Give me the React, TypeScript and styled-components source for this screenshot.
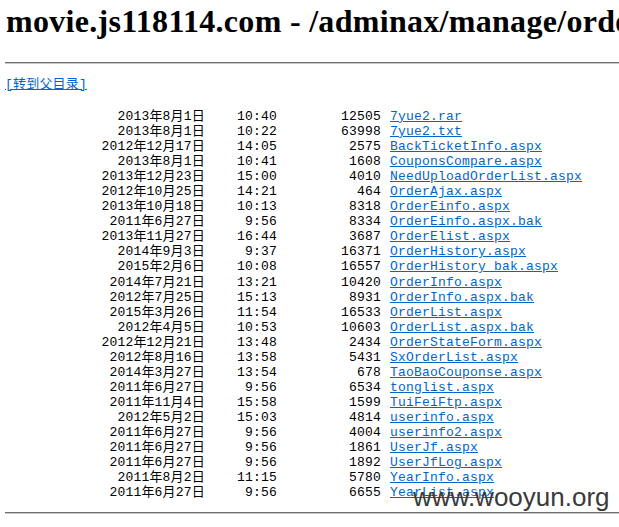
import React from "react";
import styled, { createGlobalStyle } from "styled-components";

interface Entry {
  date: string;
  time: string;
  size: number;
  name: string;
}

const ENTRIES: Entry[] = [
  { date: "2013年8月1日", time: "10:40", size: 12505, name: "7yue2.rar" },
  { date: "2013年8月1日", time: "10:22", size: 63998, name: "7yue2.txt" },
  { date: "2012年12月17日", time: "14:05", size: 2575, name: "BackTicketInfo.aspx" },
  { date: "2013年8月1日", time: "10:41", size: 1608, name: "CouponsCompare.aspx" },
  { date: "2013年12月23日", time: "15:00", size: 4010, name: "NeedUploadOrderList.aspx" },
  { date: "2012年10月25日", time: "14:21", size: 464, name: "OrderAjax.aspx" },
  { date: "2013年10月18日", time: "10:13", size: 8318, name: "OrderEinfo.aspx" },
  { date: "2011年6月27日", time: "9:56", size: 8334, name: "OrderEinfo.aspx.bak" },
  { date: "2013年11月27日", time: "16:44", size: 3687, name: "OrderElist.aspx" },
  { date: "2014年9月3日", time: "9:37", size: 16371, name: "OrderHistory.aspx" },
  { date: "2015年2月6日", time: "10:08", size: 16557, name: "OrderHistory bak.aspx" },
  { date: "2014年7月21日", time: "13:21", size: 10420, name: "OrderInfo.aspx" },
  { date: "2012年7月25日", time: "15:13", size: 8931, name: "OrderInfo.aspx.bak" },
  { date: "2015年3月26日", time: "11:54", size: 16533, name: "OrderList.aspx" },
  { date: "2012年4月5日", time: "10:53", size: 10603, name: "OrderList.aspx.bak" },
  { date: "2012年12月21日", time: "13:48", size: 2434, name: "OrderStateForm.aspx" },
  { date: "2012年8月16日", time: "13:58", size: 5431, name: "SxOrderList.aspx" },
  { date: "2014年3月27日", time: "13:54", size: 678, name: "TaoBaoCouponse.aspx" },
  { date: "2011年6月27日", time: "9:56", size: 6534, name: "tonglist.aspx" },
  { date: "2011年11月4日", time: "15:58", size: 1599, name: "TuiFeiFtp.aspx" },
  { date: "2012年5月2日", time: "15:03", size: 4814, name: "userinfo.aspx" },
  { date: "2011年6月27日", time: "9:56", size: 4004, name: "userinfo2.aspx" },
  { date: "2011年6月27日", time: "9:56", size: 1861, name: "UserJf.aspx" },
  { date: "2011年6月27日", time: "9:56", size: 1892, name: "UserJfLog.aspx" },
  { date: "2011年8月2日", time: "11:15", size: 5780, name: "YearInfo.aspx" },
  { date: "2011年6月27日", time: "9:56", size: 6655, name: "YearList.aspx" },
];

const GlobalStyle = createGlobalStyle`
  html, body {
    margin: 0;
    overflow: hidden;
    background: #fff;
  }
  body {
    padding: 0 0 0 6px;
  }
`;

function App() {
  return (
    <>
      <GlobalStyle />
      <Page>
        <Title>movie.js118114.com - /adminax/manage/order/</Title>
        <Rule />
        <Listing>
          <ParentLink href="#">[转到父目录]</ParentLink>
          <Rows>
            {ENTRIES.map((e) => (
              <React.Fragment key={e.name}>
                <DateCell>{e.date}</DateCell>
                <NumCell>{e.time}</NumCell>
                <NumCell>{e.size}</NumCell>
                <FileLink href="#">{e.name}</FileLink>
              </React.Fragment>
            ))}
          </Rows>
        </Listing>
        <Rule $bottom />
        <Watermark>www.wooyun.org</Watermark>
      </Page>
    </>
  );
}

export default App;

const Page = styled.div`
  position: relative;
  height: 527px;
`;

const Title = styled.h1`
  margin: 0;
  padding-top: 3px;
  font-family: "Liberation Serif", "Times New Roman", serif;
  font-size: 32px;
  font-weight: bold;
  line-height: 36.8px;
  letter-spacing: 0.3px;
  color: #000;
  white-space: nowrap;
  overflow: hidden;
`;

const Rule = styled.hr<{ $bottom?: boolean }>`
  margin: ${(p) => (p.$bottom ? "12px 0 0 -1px" : "22px 0 0 -1px")};
  height: 0;
  border: 0;
  border-top: 1px solid #6e6e6e;
  border-bottom: 1px solid #c8c8c8;
`;

const Listing = styled.div`
  margin-top: 13px;
  font-family: "Liberation Mono", "Courier New", "Noto Sans CJK SC", monospace;
  font-size: 13px;
  line-height: 15.06px;
  letter-spacing: 0.2px;
  color: #000;
`;

const ParentLink = styled.a`
  display: inline-block;
  margin-left: -1px;
  color: #0066cc;
  text-decoration: underline;
`;

const Rows = styled.div`
  display: grid;
  grid-template-columns: 199px 72px 104px auto;
  margin-top: 17px;
`;

const DateCell = styled.span`
  text-align: right;
  white-space: nowrap;
`;

const NumCell = styled.span`
  text-align: right;
  white-space: nowrap;
`;

const FileLink = styled.a`
  justify-self: start;
  margin-left: 9px;
  color: #0066cc;
  text-decoration: underline;
  white-space: pre;
`;

const Watermark = styled.div`
  position: absolute;
  left: 407px;
  top: 484px;
  font-family: "Liberation Sans", Arial, sans-serif;
  font-size: 26px;
  line-height: 26px;
  color: #3a3a3a;
  pointer-events: none;
`;
